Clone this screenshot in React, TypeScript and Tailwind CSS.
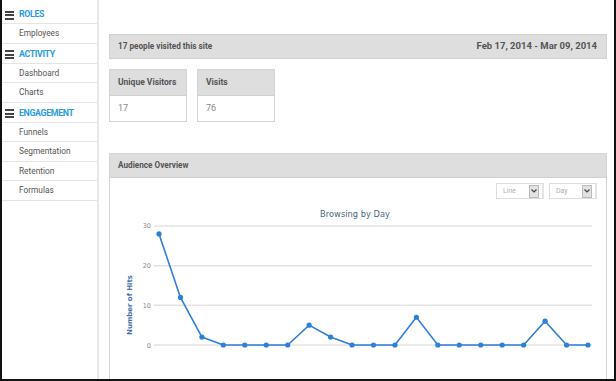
import React from "react";

const data = [28, 12, 2, 0, 0, 0, 0, 5, 2, 0, 0, 0, 7, 0, 0, 0, 0, 0, 6, 0, 0];

function Burger() {
  return (
    <span className="flex flex-col gap-[1.5px] w-[9px] mr-[5px]">
      <span className="block h-[2px] bg-[#444]" />
      <span className="block h-[2px] bg-[#444]" />
      <span className="block h-[2px] bg-[#444]" />
    </span>
  );
}

function Header({ label }: { label: string }) {
  return (
    <div className="h-[20px] flex items-center pl-[3px] pt-[3px] border-b border-[#e4e4e4]">
      <Burger />
      <span className="text-[8.8px] font-bold text-[#2b9be0] tracking-[-0.35px]">{label}</span>
    </div>
  );
}

function Item({ label }: { label: string }) {
  return (
    <div className="h-[19.5px] flex items-center pl-[17px] border-b border-[#e4e4e4] text-[8.3px] text-[#555]">
      {label}
    </div>
  );
}

function Chart() {
  const x = (i: number) => 49 + i * 21.45;
  const y = (v: number) => 146 - v * 3.967;
  const pts = data.map((v, i) => `${x(i)},${y(v)}`).join(" ");
  const grid = [0, 10, 20, 30];
  return (
    <svg width="496" height="180" className="block">
      <text x="245" y="18" textAnchor="middle" fill="#4d6580" fontSize="8.3" fontFamily="'DejaVu Sans', sans-serif">
        Browsing by Day
      </text>
      {grid.map((g) => (
        <g key={g}>
          <line x1="44" x2="482" y1={y(g)} y2={y(g)} stroke="#e3e3e3" strokeWidth="1.5" />
          <text x="41" y={y(g) + 2.5} textAnchor="end" fill="#888" fontSize="6.5" fontFamily="'DejaVu Sans', sans-serif">
            {g}
          </text>
        </g>
      ))}
      <text
        x="0"
        y="0"
        transform="translate(22,106) rotate(-90)"
        textAnchor="middle"
        fill="#4572a7"
        fontSize="7"
        fontWeight="bold"
        fontFamily="'DejaVu Sans', sans-serif"
      >
        Number of Hits
      </text>
      <polyline points={pts} fill="none" stroke="#2f7ed8" strokeWidth="1.6" />
      {data.map((v, i) => (
        <circle key={i} cx={x(i)} cy={y(v)} r="2.6" fill="#2f7ed8" />
      ))}
    </svg>
  );
}

function Select({ label }: { label: string }) {
  return (
    <div className="w-[48px] h-[16px] border border-[#dcdcdc] border-r-[2px] border-r-[#e4e4e4] flex items-center pl-[6px] pr-[3px] bg-white">
      <span className="flex-1 text-[7px] text-[#b0b0b0]">{label}</span>
      <span className="w-[10px] h-[13px] bg-[#e2e2e2] border border-[#bbb] flex items-center justify-center">
        <svg width="6" height="4" viewBox="0 0 6 4">
          <path d="M0.5 0.5 L3 3 L5.5 0.5" fill="none" stroke="#444" strokeWidth="1.2" />
        </svg>
      </span>
    </div>
  );
}

export default function App() {
  return (
    <div
      className="w-[616px] h-[381px] overflow-hidden bg-white border-l-2 border-r-2 border-b-2 border-[#111] flex"
      style={{ fontFamily: "Roboto, 'Open Sans', sans-serif" }}
    >
      <div className="w-[97px] shrink-0 border-r-2 border-[#e8e8e8] pt-[4px]">
        <Header label="ROLES" />
        <Item label="Employees" />
        <Header label="ACTIVITY" />
        <Item label="Dashboard" />
        <Item label="Charts" />
        <Header label="ENGAGEMENT" />
        <Item label="Funnels" />
        <Item label="Segmentation" />
        <Item label="Retention" />
        <Item label="Formulas" />
      </div>
      <div className="w-[498px] ml-[10px] pt-[34px] flex flex-col">
        <div className="h-[26px] bg-[#dedede] border border-[#d2d2d2] flex items-center justify-between pl-[8px] pr-[9px]">
          <span className="text-[8.2px] font-bold text-[#555]">17 people visited this site</span>
          <span className="text-[9.5px] font-bold text-[#555]">Feb 17, 2014 - Mar 09, 2014</span>
        </div>
        <div className="flex gap-[10px] mt-[10px]">
          {[
            ["Unique Visitors", "17"],
            ["Visits", "76"],
          ].map(([h, v]) => (
            <div key={h} className="w-[78px] border border-[#d4d4d4]">
              <div className="h-[26px] bg-[#dedede] border-b border-[#d0d0d0] flex items-center pl-[8px] text-[8.5px] font-bold text-[#555]">
                {h}
              </div>
              <div className="h-[25px] flex items-center pl-[8px] text-[9px] text-[#888]">{v}</div>
            </div>
          ))}
        </div>
        <div className="mt-[31px] flex-1 border border-[#d4d4d4] border-b-0 flex flex-col">
          <div className="h-[24px] bg-[#dedede] border-b border-[#d0d0d0] flex items-center pl-[8px] text-[8.2px] font-bold text-[#555]">
            Audience Overview
          </div>
          <div className="flex justify-end gap-[5px] pr-[9px] mt-[5px]">
            <Select label="Line" />
            <Select label="Day" />
          </div>
          <Chart />
        </div>
      </div>
    </div>
  );
}
